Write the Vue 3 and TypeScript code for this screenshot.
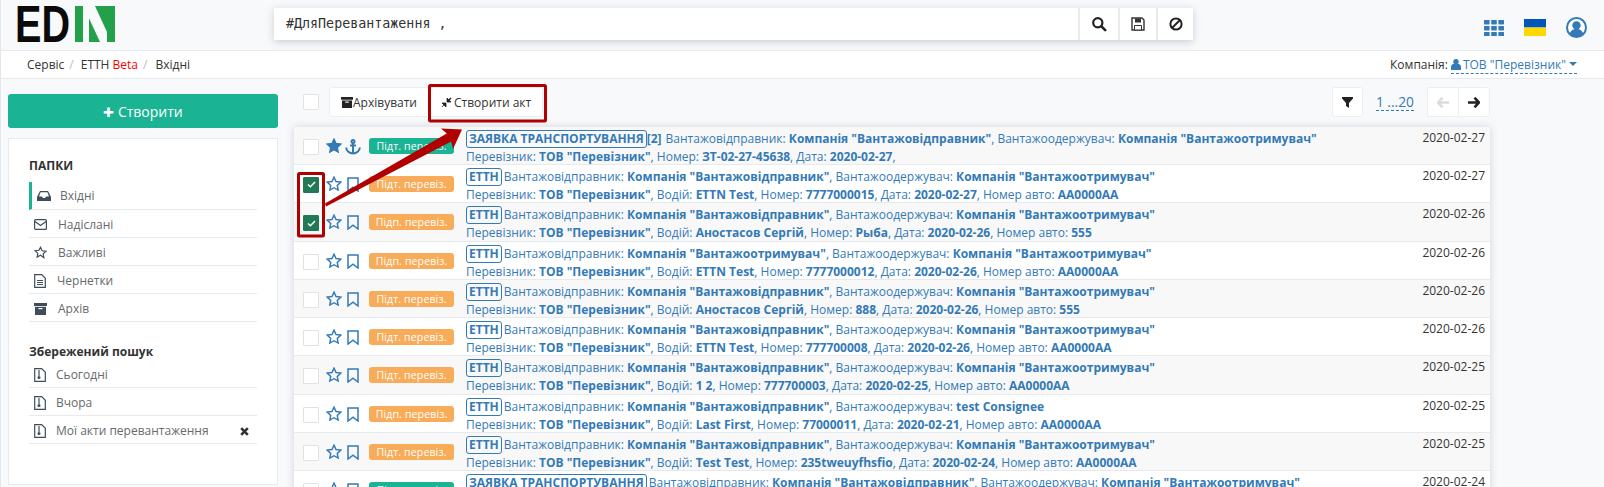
<script setup lang="ts">
type Pair = [string, string]
interface Row {
  kind: 'etn' | 'req'
  badge: string
  date: string
  extra?: string
  checked?: boolean
  filled?: boolean
  line1: Pair[]
  line2: Pair[]
}
const sender = 'Компанія "Вантажовідправник"'
const receiver = 'Компанія "Вантажоотримувач"'
const carrier = 'ТОВ "Перевізник"'
const l1 = (a = sender, b = receiver): Pair[] => [['Вантажовідправник', a], ['Вантажоодержувач', b]]
const l2 = (d: string, n: string, dt: string, car: string): Pair[] => [
  ['Перевізник', carrier], ['Водій', d], ['Номер', n], ['Дата', dt], ['Номер авто', car]
]
const TK = 'Підт. перевіз.'
const TP = 'Підп. перевіз.'
const rows: Row[] = [
  { kind: 'req', badge: TK, date: '2020-02-27', extra: '[2]', filled: true, line1: l1(), line2: [['Перевізник', carrier], ['Номер', 'ЗТ-02-27-45638'], ['Дата', '2020-02-27']] },
  { kind: 'etn', badge: TK, date: '2020-02-27', checked: true, line1: l1(), line2: l2('ETTN Test', '7777000015', '2020-02-27', 'АА0000АА') },
  { kind: 'etn', badge: TP, date: '2020-02-26', checked: true, line1: l1(), line2: l2('Аностасов Сергій', 'Рыба', '2020-02-26', '555') },
  { kind: 'etn', badge: TP, date: '2020-02-26', line1: l1(receiver), line2: l2('ETTN Test', '7777000012', '2020-02-26', 'АА0000АА') },
  { kind: 'etn', badge: TK, date: '2020-02-26', line1: l1(), line2: l2('Аностасов Сергій', '888', '2020-02-26', '555') },
  { kind: 'etn', badge: TK, date: '2020-02-26', line1: l1(), line2: l2('ETTN Test', '777700008', '2020-02-26', 'АА0000АА') },
  { kind: 'etn', badge: TK, date: '2020-02-25', line1: l1(), line2: l2('1 2', '777700003', '2020-02-25', 'АА0000АА') },
  { kind: 'etn', badge: TP, date: '2020-02-25', line1: l1(sender, 'test Consignee'), line2: l2('Last First', '77000011', '2020-02-21', 'АА0000АА') },
  { kind: 'etn', badge: TK, date: '2020-02-25', line1: l1(), line2: l2('Test Test', '235tweuyfhsfio', '2020-02-24', 'АА0000АА') },
  { kind: 'req', badge: TK, date: '2020-02-24', line1: l1(), line2: l2('Test Test', '1', '2020-02-24', 'АА0000АА') }
]
const folders = ['Вхідні', 'Надіслані', 'Важливі', 'Чернетки', 'Архів']
const searches = ['Сьогодні', 'Вчора', 'Мої акти перевантаження']
</script>

<template>
  <div class="page">
    <header class="top">
      <svg class="logo" width="110" height="50" viewBox="0 0 110 50">
        <text x="-2" y="42" class="logo-text" textLength="55" lengthAdjust="spacingAndGlyphs">ED</text>
        <rect x="58" y="6" width="8" height="36" fill="#22a04a" />
        <path d="M72 18.300L83 42H72zM78 6h20v36h-8V32z" fill="#22a04a" />
      </svg>
      <div class="search">
        <div class="search-input">#ДляПеревантаження ,</div>
        <button class="sbtn s1">
          <svg width="16" height="16" viewBox="0 0 16 16"><circle cx="6.800" cy="6.800" r="4.600" fill="none" stroke="#222" stroke-width="2.200" /><path d="M10.200 10.200l4 4" stroke="#222" stroke-width="2.600" stroke-linecap="round" /></svg>
        </button>
        <button class="sbtn s2">
          <svg width="14" height="14" viewBox="0 0 14 14"><path d="M1 1h10l2 2v10H1z" fill="#fff" stroke="#333" stroke-width="1.400" /><path d="M4 1.500h6v4H4z" fill="#333" /><path d="M3.500 8.500h7V13h-7z" fill="#fff" stroke="#333" /></svg>
        </button>
        <button class="sbtn s3">
          <svg width="14" height="14" viewBox="0 0 14 14"><circle cx="7" cy="7" r="5.600" fill="none" stroke="#222" stroke-width="2" /><path d="M3 11l8-8" stroke="#222" stroke-width="2" /></svg>
        </button>
      </div>
      <div class="top-right">
        <svg width="20" height="16" viewBox="0 0 20 16" fill="#337ab7">
          <template v-for="y in [0, 6, 12]" :key="y">
            <rect x="0" :y="y" width="5.600" height="4.400" rx=".6" /><rect x="7.200" :y="y" width="5.600" height="4.400" rx=".6" /><rect x="14.400" :y="y" width="5.600" height="4.400" rx=".6" />
          </template>
        </svg>
        <svg class="flag" width="22" height="17" viewBox="0 0 22 17"><rect width="22" height="8.500" fill="#0057b7" /><rect y="8.500" width="22" height="8.500" fill="#ffd700" /></svg>
        <svg class="avatar" width="21" height="21" viewBox="0 0 21 21"><circle cx="10.500" cy="10.500" r="9.500" fill="#fff" stroke="#337ab7" stroke-width="2" /><circle cx="10.500" cy="8.400" r="4.200" fill="#337ab7" /><path d="M3.800 16.500c1-3.400 3.600-4.600 6.700-4.600s5.700 1.200 6.700 4.600a9 9 0 0 1-13.400 0z" fill="#337ab7" /></svg>
      </div>
    </header>

    <nav class="crumbs">
      <div class="crumb-list">
        <span>Сервіс</span><i>/</i><span>ЕТТН <b>Beta</b></span><i>/</i><span class="last">Вхідні</span>
      </div>
      <div class="company">
        Компанія:
        <span class="company-link">
          <svg width="10" height="11" viewBox="0 0 10 11" fill="#337ab7"><circle cx="5" cy="2.800" r="2.700" /><path d="M0 11V8c0-2 1.500-3 2.500-3h5C8.500 5 10 6 10 8v3z" /></svg>
          ТОВ "Перевізник"
          <em class="caret"></em>
        </span>
      </div>
    </nav>

    <div class="body">
      <aside class="side">
        <button class="create"><span class="plus">✚</span> Створити</button>
        <div class="panel">
          <h5>ПАПКИ</h5>
          <ul>
            <li v-for="(f, i) in folders" :key="f" :class="['item', 'f' + i, { active: i === 0 }]">
              <svg v-if="i === 0" width="14" height="12" viewBox="0 0 14 12"><path d="M3 1h8l3 6v4H0V7z" fill="#3f4d5a" /><path d="M3.600 2.200h6.800L12 6.500H9l-1 1.500H6L5 6.500H2z" fill="#fff" /></svg>
              <svg v-else-if="i === 1" width="13" height="11" viewBox="0 0 13 11"><rect x=".6" y=".6" width="11.800" height="9.800" rx="1" fill="none" stroke="#3f4d5a" stroke-width="1.200" /><path d="M1 2.500l5.500 4 5.500-4" fill="none" stroke="#3f4d5a" stroke-width="1.200" /></svg>
              <svg v-else-if="i === 2" width="13" height="13" viewBox="0 0 24 24"><path d="M12 2.500l3 6.400 7 .9-5.100 4.800 1.300 6.900L12 17.100 5.800 20.500l1.300-6.900L2 8.800l7-.9z" fill="none" stroke="#3f4d5a" stroke-width="2.200" /></svg>
              <svg v-else-if="i === 3" width="12" height="14" viewBox="0 0 12 14"><path d="M.7.700h7l3.600 3.600v9H.7z" fill="none" stroke="#3f4d5a" stroke-width="1.200" /><path d="M3 6.500h6M3 8.500h6M3 10.500h6" stroke="#3f4d5a" /></svg>
              <svg v-else width="13" height="12" viewBox="0 0 13 12"><rect width="13" height="3" fill="#3f4d5a" /><path d="M1 3.800h11V12H1z" fill="#3f4d5a" /><rect x="4.500" y="5" width="4" height="1.200" fill="#fff" /></svg>
              <span>{{ f }}</span>
            </li>
          </ul>
          <h5 class="saved">Збережений пошук</h5>
          <ul>
            <li v-for="(s, i) in searches" :key="s" class="item s">
              <svg width="12" height="14" viewBox="0 0 12 14"><path d="M.7.700h7l3.600 3.600v9H.7z" fill="none" stroke="#3f4d5a" stroke-width="1.200" /><path d="M5 2v6" stroke="#3f4d5a" stroke-width="1.200" /><circle cx="5" cy="9.500" r="1.500" fill="#3f4d5a" /></svg>
              <span>{{ s }}</span>
              <svg v-if="i === 2" class="del" width="9" height="9" viewBox="0 0 9 9"><path d="M1.200 1.200l6.600 6.600M7.800 1.200L1.200 7.800" stroke="#333" stroke-width="2.600" /></svg>
            </li>
          </ul>
        </div>
      </aside>

      <main class="main">
        <div class="toolbar">
          <span class="cb tool-cb"></span>
          <div class="group">
            <button class="tbtn first">
              <svg width="12" height="11" viewBox="0 0 13 12"><rect width="13" height="3" fill="#222" /><path d="M1 3.800h11V12H1z" fill="#222" /><rect x="4.500" y="5" width="4" height="1.200" fill="#fff" /></svg>
              Архівувати
            </button>
            <button class="tbtn">
              <svg width="11" height="11" viewBox="0 0 11 11"><path d="M1 10l3-3M6 1v4h4zM5 10V6H1z" fill="#222" stroke="#222" stroke-width=".8" /><path d="M10 1L7 4" stroke="#222" stroke-width="1.400" /></svg>
              Створити акт
            </button>
          </div>
          <div class="tool-right">
            <button class="ibtn">
              <svg width="11" height="11" viewBox="0 0 11 11"><path d="M0 0h11v1.500L7 6v5L4 9V6L0 1.500z" fill="#222" /></svg>
            </button>
            <span class="pager">1 ...20</span>
            <div class="pair">
              <button class="ibtn">
                <svg width="12" height="11" viewBox="0 0 12 11"><path d="M5.500.700L1 5.500l4.500 4.800M1.500 5.500H12" fill="none" stroke="#dcdcdc" stroke-width="2.600" /></svg>
              </button>
              <button class="ibtn">
                <svg width="12" height="11" viewBox="0 0 12 11"><path d="M6.500.700L11 5.500l-4.500 4.800M10.500 5.500H0" fill="none" stroke="#222" stroke-width="2.600" /></svg>
              </button>
            </div>
          </div>
        </div>

        <div class="list">
          <div v-for="(r, i) in rows" :key="i" :class="['row', { odd: i % 2 === 0 }]">
            <span :class="['cb', { on: r.checked }]">
              <svg v-if="r.checked" width="9" height="7" viewBox="0 0 9 7"><path d="M1 3.500l2.400 2.300L8 1" fill="none" stroke="#fff" stroke-width="1.500" /></svg>
            </span>
            <svg class="star" width="16" height="15" viewBox="0 0 24 23">
              <path d="M12 1.800l3.100 6.600 7.200 1-5.300 5 1.400 7.100L12 18l-6.400 3.500L7 14.400l-5.300-5 7.200-1z" :fill="r.filled ? '#337ab7' : 'none'" stroke="#337ab7" stroke-width="2.200" />
            </svg>
            <svg v-if="r.filled" class="mark" width="16" height="16" viewBox="0 0 16 16" fill="none" stroke="#337ab7" stroke-width="2"><circle cx="8" cy="2.500" r="1.500" /><path d="M8 4v11M5 6.500h6M1.200 8.500c0 3.500 3.300 6 6.800 6s6.800-2.500 6.800-6" /></svg>
            <svg v-else class="mark" width="12" height="15" viewBox="0 0 12 15"><path d="M1 1h10v13L6 10.200 1 14z" fill="none" stroke="#337ab7" stroke-width="1.500" /></svg>
            <span :class="['badge', r.kind === 'req' ? 'green' : 'orange']">{{ r.badge }}</span>
            <div class="text">
              <div class="line">
                <span :class="['tag', { tight: r.extra }]">{{ r.kind === 'req' ? 'ЗАЯВКА ТРАНСПОРТУВАННЯ' : 'ЕТТН' }}</span>
                <b v-if="r.extra" class="extra">{{ r.extra }}</b>
                <span v-for="(p, j) in r.line1" :key="j">{{ p[0] }}: <b>{{ p[1] }}</b><template v-if="j < r.line1.length - 1">, </template></span>
              </div>
              <div class="line">
                <span v-for="(p, j) in r.line2" :key="j">{{ p[0] }}: <b>{{ p[1] }}</b><template v-if="j < r.line2.length - 1 || r.filled">, </template></span>
              </div>
            </div>
            <span class="date">{{ r.date }}</span>
          </div>
        </div>
      </main>
    </div>

    <svg class="overlay" width="1604" height="487" viewBox="0 0 1604 487">
      <rect x="429.500" y="85.500" width="116" height="35.500" rx="1" fill="none" stroke="#b00000" stroke-width="3" />
      <rect x="298.500" y="173.500" width="25" height="62.500" rx="1" fill="none" stroke="#b00000" stroke-width="3" />
      <path d="M325 203.500L446.800 133.600L441 128.500L462 129.500L453 149L451.200 141.400L326 206.500z" fill="#b00000" />
    </svg>
  </div>
</template>

<style>
html, body { margin: 0; background: #fff; overflow: hidden; }
</style>

<style scoped>
.page { position: relative; width: 1604px; height: 487px; overflow: hidden; box-sizing: border-box; background: #f8f9fb; border-left: 1px solid #e4e6ee; font-family: "Open Sans", "Noto Sans", sans-serif; font-size: 12px; color: #676a6c; }
button { font-family: inherit; margin: 0; cursor: pointer; }
b { font-weight: 700; }
ul { list-style: none; margin: 0; padding: 0; }
h5 { margin: 0; }

.top { height: 50px; display: flex; align-items: flex-start; border-bottom: 1px solid #e7eaec; box-sizing: content-box; }
.logo { margin: 0 0 0 16px; flex: none; }
.logo-text { font-family: "Liberation Sans", sans-serif; font-weight: 700; font-size: 52px; fill: #0a0a0a; }
.search { margin: 8px 0 0 147px; width: 919px; height: 32px; display: flex; background: #fff; box-shadow: 0 2px 8px rgba(40, 50, 80, .22); }
.search-input { flex: 1; padding-left: 12px; line-height: 32px; font-family: "DejaVu Sans Mono", monospace; font-size: 13.330px; color: #333; }
.sbtn { height: 32px; border: 0; border-left: 2px solid #e9e9e9; background: #fff; padding: 0; display: flex; align-items: center; justify-content: center; }
.s1 { width: 40px; }
.s2 { width: 38px; }
.s3 { width: 37px; }
.top-right { margin-left: auto; display: flex; align-items: center; padding: 17px 17px 0 0; }
.flag { margin-left: 20px; }
.avatar { margin-left: 20px; }

.crumbs { height: 27px; background: #fff; border-bottom: 1px solid #e7eaec; display: flex; align-items: center; justify-content: space-between; padding: 0 27px 0 26px; color: #333; }
.crumb-list i { font-style: normal; color: #bbb; margin: 0 7px 0 5px; }
.crumb-list b { font-weight: 400; color: #f00; }
.crumb-list .last { margin-left: 1px; }
.company { display: flex; align-items: center; gap: 3px; }
.company-link { color: #337ab7; border-bottom: 1px dashed #337ab7; display: flex; align-items: center; gap: 2px; height: 18px; }
.caret { display: inline-block; width: 0; height: 0; border: 4px solid transparent; border-top-color: #337ab7; border-bottom: 0; margin-left: 1px; }

.body { display: flex; align-items: flex-start; padding: 8px 0 0 7px; }
.side { width: 271px; flex: none; padding-top: 7px; }
.create { display: block; width: 270px; height: 34px; border: 0; border-radius: 3px; background: #1ab394; color: #fff; font-size: 14px; padding: 0; }
.plus { font-size: 13px; }
.panel { margin-top: 10px; width: 270px; height: 347px; box-sizing: border-box; background: #fff; border: 1px solid #e7eaf3; padding: 18px 20px 0 20px; }
.panel h5 { font-size: 12px; font-weight: 700; color: #333; line-height: 17px; margin-bottom: 8px; }
.panel h5.saved { margin: 21px 0 0; }
.item { height: 28px; display: flex; align-items: center; border-bottom: 1px solid #e7eaec; box-sizing: border-box; padding: 2px 0 0 5px; position: relative; }
.item span { margin-left: 11px; }
.item.active { border-left: 3px solid #1ab394; padding: 0 0 0 5px; }
.item.f0 span { margin-left: 9px; }
.item.f4 span { margin-left: 11px; }
.item.s span { margin-left: 10px; }
.del { position: absolute; right: 8px; top: 11px; }

.main { width: 1196px; flex: none; margin-left: 15px; }
.toolbar { height: 30px; display: flex; align-items: center; }
.cb { width: 14px; height: 14px; border: 1px solid #e2e2e2; background: #fff; border-radius: 1px; flex: none; display: flex; align-items: center; justify-content: center; }
.cb.on { background: #217a57; border-color: #217a57; }
.tool-cb { margin-left: 9px; }
.group { margin-left: 10px; display: flex; background: #fff; border: 1px solid #eceef0; border-radius: 3px; height: 30px; box-sizing: border-box; }
.tbtn { border: 0; background: transparent; color: #333; font-size: 12px; padding: 0 11px; display: flex; align-items: center; gap: 2px; }
.tbtn.first { gap: 0; padding-right: 13px; }
.tool-right { margin-left: auto; display: flex; align-items: center; }
.ibtn { width: 31px; height: 30px; background: #fff; border: 1px solid #eceef0; border-radius: 3px; padding: 0; display: flex; align-items: center; justify-content: center; box-sizing: border-box; }
.pager { margin: 0 13px 0 13px; color: #337ab7; font-size: 13.800px; border-bottom: 1px dashed #337ab7; line-height: 16px; }
.pair { display: flex; }
.pair .ibtn { width: 32px; }
.pair .ibtn:first-child { border-radius: 3px 0 0 3px; border-right: 0; width: 31px; }
.pair .ibtn:last-child { border-radius: 0 3px 3px 0; }

.list { margin-top: 9.700px; background: #fff; box-shadow: 0 0 8px rgba(60, 70, 100, .2); }
.row { height: 38.300px; box-sizing: border-box; border-bottom: 1px solid #e7eaec; background: #fff; display: flex; align-items: flex-start; position: relative; }
.row.odd { background: #f8f8f8; }
.row > .cb { margin: 12px 0 0 9px; }
.star { margin: 11px 0 0 7px; flex: none; }
.mark { margin: 12px 0 0 3px; flex: none; width: 16px; }
.badge { margin: 11px 0 0 8px; width: 85px; height: 16px; border-radius: 3px; color: #fff; text-align: center; line-height: 16px; font-size: 10.500px; flex: none; letter-spacing: .15px; }
.orange { background: #f8ac59; }
.green { background: #1ab394; }
.text { margin: 3px 0 0 12px; color: #337ab7; font-size: 12px; line-height: 18px; white-space: nowrap; }
.line { height: 18px; }
.line b { color: #337ab7; }
.tag { display: inline-block; border: 1px solid #337ab7; border-radius: 3px; font-weight: 700; padding: 0 2px; line-height: 16px; margin-right: 2px; font-size: 12px; }
.tag.tight { margin-right: 0; }
.extra { margin-right: 4px; }
.date { position: absolute; right: 5px; top: 2px; color: #333; line-height: 18px; font-size: 12px; }

.overlay { position: absolute; left: -1px; top: 0; pointer-events: none; }
</style>
